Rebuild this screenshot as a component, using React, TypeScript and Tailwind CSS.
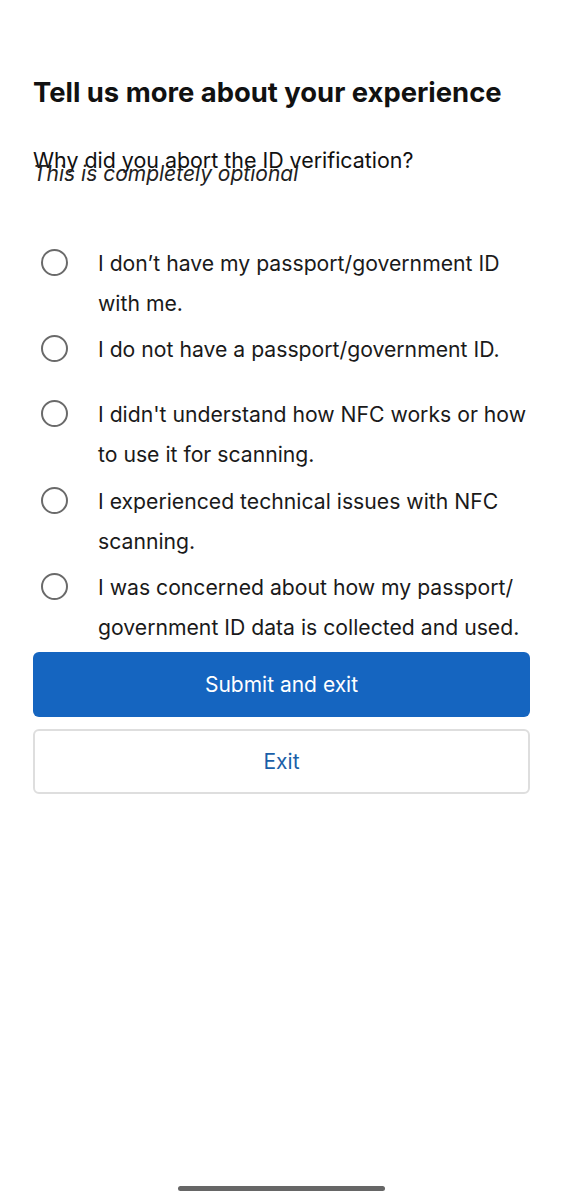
const options = [
  { text: "I don’t have my passport/government ID with me.", mt: "mt-0" },
  { text: "I do not have a passport/government ID.", mt: "mt-[6px]" },
  { text: "I didn't understand how NFC works or how to use it for scanning.", mt: "mt-[25px]" },
  { text: "I experienced technical issues with NFC scanning.", mt: "mt-[7px]" },
  { text: "I was concerned about how my passport/ government ID data is collected and used.", mt: "mt-[6px]" },
];

function RadioRow({ text, mt }: { text: string; mt: string }) {
  return (
    <label className={`flex items-start ${mt}`}>
      <span className="w-[65px] shrink-0 pt-[6px] pl-[8px]">
        <span className="block h-[27px] w-[27px] rounded-full border-[2.5px] border-[#6a6a6a]" />
      </span>
      <span className="text-[21.2px] leading-[40px] text-[#1a1a1a]">{text}</span>
    </label>
  );
}

export default function App() {
  return (
    <div
      className="flex h-[1200px] flex-col bg-white px-[33px]"
      style={{ fontFamily: "Inter, 'Noto Sans', sans-serif" }}
    >
      <h1 className="mt-[74px] text-[27.4px] font-bold leading-[36px] text-[#111]">
        Tell us more about your experience
      </h1>
      <p className="mt-[36px] text-[21.4px] leading-[28px] text-[#111]">
        Why did you abort the ID verification?
      </p>
      <p className="-mt-[14px] text-[21px] italic leading-[28px] text-[#222]">
        This is completely optional
      </p>

      <div className="mt-[55px] flex flex-col pr-[2px]">
        {options.map((o) => (
          <RadioRow key={o.text} text={o.text} mt={o.mt} />
        ))}
      </div>

      <button className="mt-[5px] h-[65px] w-full rounded-[6px] bg-[#1565c0] text-[21px] text-white">
        Submit and exit
      </button>
      <button className="mt-[12px] h-[65px] w-full rounded-[6px] border-2 border-[#dedede] bg-white text-[21px] text-[#1a5fa8]">
        Exit
      </button>

      <div className="mt-auto mb-[9px] h-[5px] w-[207px] self-center rounded-full bg-[#666]" />
    </div>
  );
}
